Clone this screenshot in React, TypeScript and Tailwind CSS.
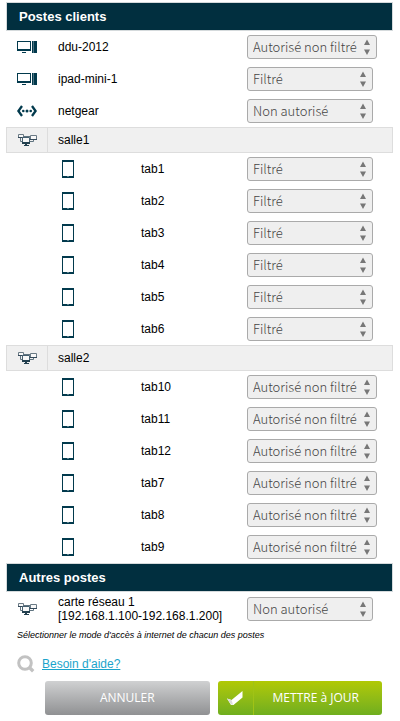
import { useState } from "react";

type Mode = "Autorisé non filtré" | "Filtré" | "Non autorisé";

const MODES: Mode[] = ["Autorisé non filtré", "Filtré", "Non autorisé"];

const CLIENTS: { name: string; kind: "desktop" | "network"; mode: Mode }[] = [
  { name: "ddu-2012", kind: "desktop", mode: "Autorisé non filtré" },
  { name: "ipad-mini-1", kind: "desktop", mode: "Filtré" },
  { name: "netgear", kind: "network", mode: "Non autorisé" },
];

const ROOMS: { name: string; mode: Mode; tablets: string[] }[] = [
  {
    name: "salle1",
    mode: "Filtré",
    tablets: ["tab1", "tab2", "tab3", "tab4", "tab5", "tab6"],
  },
  {
    name: "salle2",
    mode: "Autorisé non filtré",
    tablets: ["tab10", "tab11", "tab12", "tab7", "tab8", "tab9"],
  },
];

function DesktopIcon() {
  return (
    <svg width="20" height="12" viewBox="0 0 20 12" fill="#023a4d" aria-hidden="true">
      <path fillRule="evenodd" d="M0 0h14v10H0zM1 1v7h12V1z" />
      <path d="M5 11h4v1H5zM15 0h5v12h-5z" />
      <path d="M16 0h1v12h-1z" fill="#4f7482" />
    </svg>
  );
}

function NetworkIcon() {
  return (
    <svg width="20" height="12" viewBox="0 0 20 12" fill="none" aria-hidden="true">
      <path d="M5 1L1.4 6L5 11M15 1L18.6 6L15 11" stroke="#023a4d" strokeWidth="2.3" />
      <g fill="#023a4d">
        <circle cx="6.3" cy="6" r="1.3" />
        <circle cx="10" cy="6" r="1.5" />
        <circle cx="13.7" cy="6" r="1.3" />
      </g>
    </svg>
  );
}

function GroupIcon() {
  return (
    <svg width="20" height="14" viewBox="0 0 20 14" fill="none" aria-hidden="true">
      {/* Side screens */}
      <path d="M1.5 1.5h5v3h-5zM13.5 2.5h6v4h-6z" fill="#f8f8f8" stroke="#6a7a85" />
      <path d="M1 4h5v1H1zM13 6h7v1h-7z" fill="#34495a" />
      {/* Links */}
      <path d="M3.5 5v3.5h2M13 8.5h3.5V7M7 3.5h6" stroke="#607480" />
      {/* Middle screen */}
      <path d="M5.5 4.5h7v6h-7z" fill="#f8f8f8" stroke="#466070" />
      <path d="M5 9h8v2H5zM7 12h5v1H7zM8 11h2v1H8z" fill="#23404f" />
    </svg>
  );
}

function TabletIcon() {
  return (
    <svg width="12" height="18" viewBox="0 0 12 18" aria-hidden="true">
      <path fill="#023a4d" fillRule="evenodd" d="M0 0h12v18H0zM1 2v14h10V2z" />
      <path fill="#5f8390" d="M5 16h2v1H5z" />
    </svg>
  );
}

function ModeSelect({ label, initial }: { label: string; initial: Mode }) {
  const [mode, setMode] = useState<Mode>(initial);

  return (
    <div className="relative inline-block align-middle">
      <select
        aria-label={`Mode d'accès de ${label}`}
        value={mode}
        onChange={(e) => setMode(e.target.value as Mode)}
        className={`block h-6 appearance-none rounded-[3px] border border-[#aaa] bg-[#efefef] pl-[5px] font-['Noto_Sans_CJK_SC',sans-serif] text-[13px] leading-5 font-light text-[#444] ${
          mode === "Autorisé non filtré" ? "w-[130px]" : "w-[126px]"
        }`}
      >
        {MODES.map((m) => (
          <option key={m}>{m}</option>
        ))}
      </select>
      <svg
        className="pointer-events-none absolute top-1 right-[7px]"
        width="6"
        height="17"
        viewBox="0 0 6 17"
        fill="#777"
        aria-hidden="true"
      >
        <path d="M3 0.5L6 6H0zM3 16L0 10.5H6z" />
      </svg>
    </div>
  );
}

function SectionHeader({ title }: { title: string }) {
  return (
    <tr className="h-[29px]">
      <th
        colSpan={4}
        className="border border-[#d5dadc] bg-[#012f3f] pl-3 text-left text-[13px] leading-4 font-bold text-white"
      >
        {title}
      </th>
    </tr>
  );
}

export default function App() {
  return (
    <form
      className="bg-white pt-0.5 pr-[7px] pl-1.5 font-['Liberation_Sans',sans-serif] text-xs text-black"
      onSubmit={(e) => e.preventDefault()}
    >
      <table className="w-full table-fixed border-separate border-spacing-0">
        <colgroup>
          <col className="w-[42px]" />
          <col className="w-[83px]" />
          <col className="w-[106px]" />
          <col />
        </colgroup>

        <tbody>
          <SectionHeader title="Postes clients" />
          {CLIENTS.map((client) => (
            <tr key={client.name} className="h-8">
              <td className="pl-[11px]">
                {client.kind === "desktop" ? <DesktopIcon /> : <NetworkIcon />}
              </td>
              <td colSpan={2} className="pl-2.5">{client.name}</td>
              <td className="pl-2.5">
                <ModeSelect label={client.name} initial={client.mode} />
              </td>
            </tr>
          ))}
        </tbody>

        {ROOMS.map((room) => (
          <tbody key={room.name}>
            <tr className="h-[26px] bg-[#f0f0f0]">
              <td className="border border-[#ddd] pl-2.5">
                <GroupIcon />
              </td>
              <td colSpan={3} className="border border-l-0 border-[#ddd] pl-2.5">
                {room.name}
              </td>
            </tr>
            {room.tablets.map((tablet) => (
              <tr key={tablet} className="h-8">
                <td />
                <td className="pl-3.5">
                  <TabletIcon />
                </td>
                <td className="pl-2.5">{tablet}</td>
                <td className="pl-2.5">
                  <ModeSelect label={tablet} initial={room.mode} />
                </td>
              </tr>
            ))}
          </tbody>
        ))}

        <tbody>
          <SectionHeader title="Autres postes" />
          <tr className="h-[34px]">
            <td className="pl-[11px]">
              <GroupIcon />
            </td>
            <td colSpan={2} className="pl-2.5 leading-[14px]">
              carte réseau 1<br />
              [192.168.1.100-192.168.1.200]
            </td>
            <td className="pl-2.5">
              <ModeSelect label="carte réseau 1" initial="Non autorisé" />
            </td>
          </tr>
        </tbody>
      </table>

      <p className="mt-[3px] pl-[11px] text-[9px] leading-3 italic">
        Sélectionner le mode d'accès à internet de chacun des postes
      </p>

      {/* Help link */}
      <div className="mt-3.5 flex items-center gap-[7px] pl-[11px]">
        <svg width="18" height="18" viewBox="0 0 18 18" fill="none" stroke="#c2c2c2" aria-hidden="true">
          <circle cx="8" cy="8" r="6.3" strokeWidth="3" />
          <path d="M12.2 12.2L16.2 16.2" strokeWidth="3.4" />
        </svg>
        <a href="#aide" className="text-xs leading-4 text-[#1ba4cb] underline">
          Besoin d'aide?
        </a>
      </div>

      {/* Actions */}
      <div className="mt-2 flex gap-2 pr-[11px] pl-[39px] font-['Open_Sans',sans-serif] text-xs text-white">
        <button
          type="button"
          className="h-[34px] flex-1 rounded-[3px] bg-linear-to-b from-[#d0d1d2] to-[#909193]"
        >
          ANNULER
        </button>
        <button
          type="submit"
          className="flex h-[34px] flex-1 items-center rounded-[3px] bg-linear-to-b from-[#b1c903] to-[#6fae1e]"
        >
          <span className="flex h-full w-9 items-center justify-center border-r border-[#a0c316]">
            <svg width="16" height="14" viewBox="0 0 16 14" aria-hidden="true">
              <path d="M0 7.5L4.5 9L15.5 0V6.5L6.5 14H4z" fill="#fff" />
              <path d="M0 7.5L4.5 9L6 13.5H4z" fill="#dcdcdc" />
            </svg>
          </span>
          <span className="flex-1 pr-1 text-center">METTRE à JOUR</span>
        </button>
      </div>
    </form>
  );
}
